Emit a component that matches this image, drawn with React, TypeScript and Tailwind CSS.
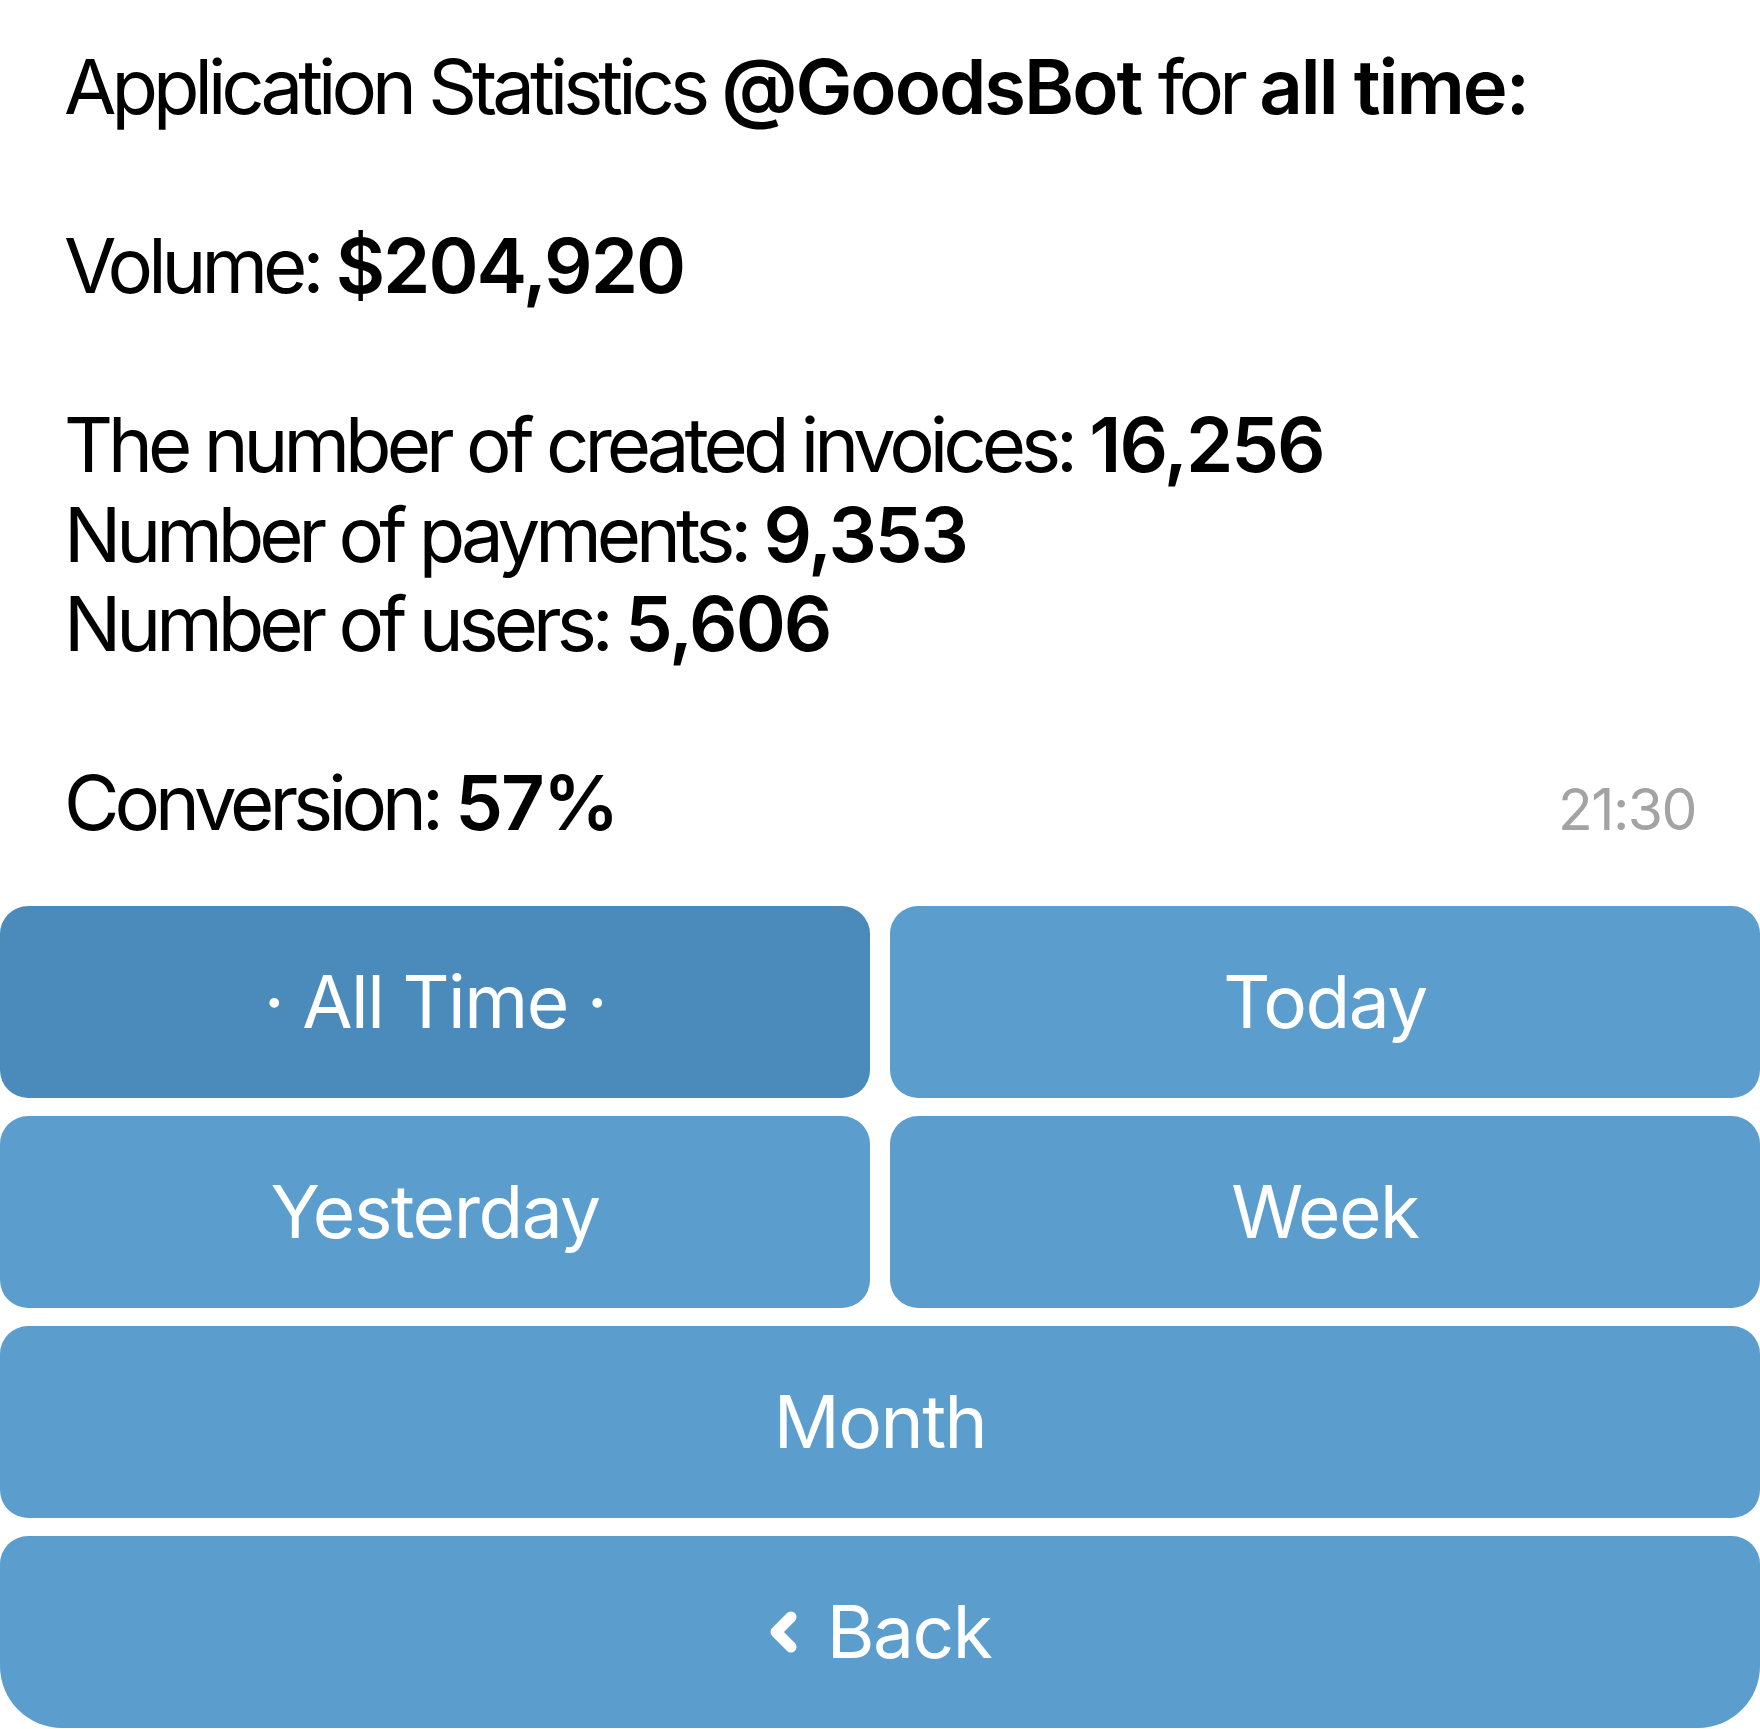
export default function App() {
  const btn =
    "flex items-center justify-center h-[192px] rounded-[28px] text-white text-[73px] leading-none tracking-[-1.5px]";
  const b = "font-semibold tracking-[-2px]";

  return (
    <div className="w-[1760px] h-[1729px] bg-white flex flex-col font-['Inter',_'Noto_Sans',_sans-serif] overflow-hidden">
      <div className="px-[64px] pt-[42px] text-[76px] leading-[89.5px] text-black tracking-[-5px]">
        <div>
          Application Statistics <span className={b}>@GoodsBot</span> for{" "}
          <span className={b}>all time:</span>
        </div>
        <div>&nbsp;</div>
        <div>
          Volume: <span className={b}>$204,920</span>
        </div>
        <div>&nbsp;</div>
        <div>
          The number of created invoices: <span className={b}>16,256</span>
        </div>
        <div>
          Number of payments: <span className={b}>9,353</span>
        </div>
        <div>
          Number of users: <span className={b}>5,606</span>
        </div>
        <div>&nbsp;</div>
        <div className="flex items-baseline justify-between">
          <span>
            Conversion: <span className={b}>57%</span>
          </span>
          <span className="text-[57px] text-[#a3a3a3] tracking-[-1.5px]">21:30</span>
        </div>
      </div>

      <div className="mt-[51px] grid grid-cols-2 gap-x-[20px] gap-y-[18px]">
        <button className={`${btn} bg-[#4a8bbb]`}>· All Time ·</button>
        <button className={`${btn} bg-[#5b9ecd]`}>Today</button>
        <button className={`${btn} bg-[#5b9ecd]`}>Yesterday</button>
        <button className={`${btn} bg-[#5b9ecd]`}>Week</button>
        <button className={`${btn} bg-[#5b9ecd] col-span-2`}>Month</button>
        <button
          className={`${btn} bg-[#5b9ecd] col-span-2 rounded-b-[62px] gap-[30px]`}
        >
          <svg width="28" height="42" viewBox="0 0 28 42" fill="none">
            <path
              d="M22 6 L7 21 L22 36"
              stroke="white"
              strokeWidth="11"
              strokeLinecap="round"
              strokeLinejoin="round"
            />
          </svg>
          <span>Back</span>
        </button>
      </div>
    </div>
  );
}
